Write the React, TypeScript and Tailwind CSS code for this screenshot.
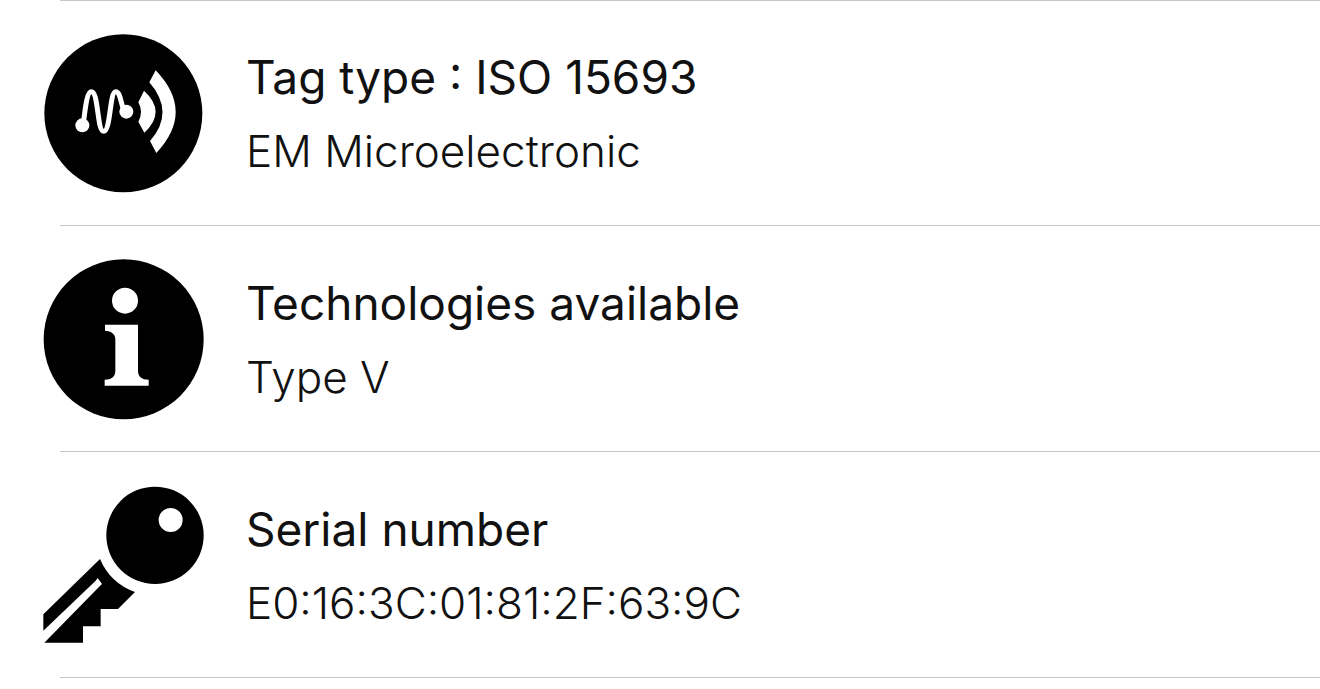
import React from 'react';

interface TagInfo {
  title: string;
  value: string;
  icon: React.ReactNode;
}

const iconClass = "w-40 h-40 shrink-0 overflow-visible";
const lineClass = "ml-[60px] border-t border-[#c6c6c8]";

const SignalIcon: React.FC = () => (
  <svg className={iconClass} viewBox="0 0 480 480" aria-hidden="true">
    <circle cx="241" cy="241" r="237" fill="#000" />
    <path
      d="M120 277C126 240 130 176 145 176C167 176 162 295 182 295C203 295 200 176 218 176C231 176 233 205 241 228"
      fill="none"
      stroke="#fff"
      strokeWidth="15"
    />
    <circle cx="118" cy="277" r="21" fill="#fff" />
    <circle cx="250" cy="236" r="21" fill="#fff" />
    <path d="M303 173L286 208Q302 236 286 266L304 299Q372 236 303 173Z" fill="#fff" />
    <path d="M338 112L319 148Q397 238 321 324L340 360Q457 236 338 112Z" fill="#fff" />
  </svg>
);

const InfoIcon: React.FC = () => (
  <svg className={iconClass} viewBox="0 0 480 480" aria-hidden="true">
    <circle cx="242" cy="241" r="240" fill="#000" />
    <circle cx="246" cy="125" r="39" fill="#fff" />
    <path
      d="M186 197H285V335C285 353 297 362 317 362V380H185V362C205 362 217 353 217 335V241C217 225 205 216 186 215Z"
      fill="#fff"
    />
  </svg>
);

const KeyIcon: React.FC = () => (
  <svg className={iconClass} viewBox="0 0 480 480" aria-hidden="true">
    <path
      fillRule="evenodd"
      d="M336 5A146 146 0 1 1 336 297A146 146 0 1 1 336 5ZM383 69A36 36 0 1 0 383 141A36 36 0 1 0 383 69Z"
      fill="#000"
    />
    <path
      d="M171 222A180 180 0 0 0 276 321L225 372H173V424H120V473H4L170 304L177 297L164 279L158 287L1 437V388Z"
      fill="#000"
    />
  </svg>
);

const TAG_INFO: TagInfo[] = [
  { title: 'Tag type : ISO 15693', value: 'EM Microelectronic', icon: <SignalIcon /> },
  { title: 'Technologies available', value: 'Type V', icon: <InfoIcon /> },
  { title: 'Serial number', value: 'E0:16:3C:01:81:2F:63:9C', icon: <KeyIcon /> },
];

const App: React.FC = () => {
  return (
    <main className="min-h-screen bg-white font-['Inter','Liberation_Sans',sans-serif] text-[#111111]">
      <ul>
        {TAG_INFO.map((item, index) => (
          <li key={item.title} className="flex flex-col min-h-[226px]">
            {index === 0 && <div className={lineClass} />}
            <div className="flex flex-1 items-center gap-[43px] pl-[43px]">
              {item.icon}
              <div className="pt-0.5">
                <h2 className="text-[46px] leading-[74px] font-normal">{item.title}</h2>
                <p className="text-[44px] leading-[74px] font-light">{item.value}</p>
              </div>
            </div>
            <div className={lineClass} />
          </li>
        ))}
      </ul>
    </main>
  );
};

export default App;
